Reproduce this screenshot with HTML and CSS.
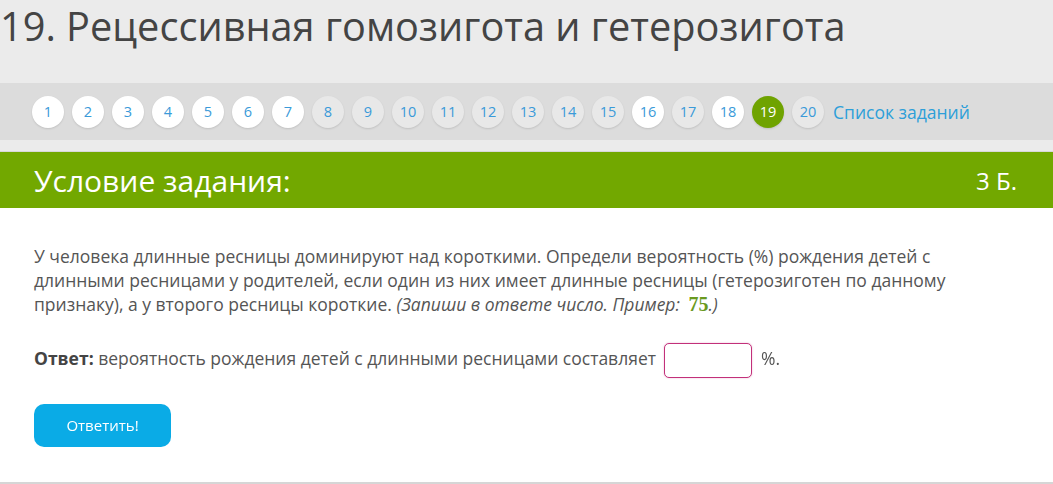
FILE: index.html
```html
<!DOCTYPE html>
<html lang="ru">
<head>
  <meta charset="UTF-8" />
  <title>19. Рецессивная гомозигота и гетерозигота</title>
  <link rel="stylesheet" href="styles.css">
</head>
<body>

  <header class="page-head">
    <h1>19. Рецессивная гомозигота и гетерозигота</h1>
  </header>

  <nav class="task-nav">
    <a class="num done" href="#">1</a>
    <a class="num done" href="#">2</a>
    <a class="num done" href="#">3</a>
    <a class="num done" href="#">4</a>
    <a class="num done" href="#">5</a>
    <a class="num done" href="#">6</a>
    <a class="num done" href="#">7</a>
    <a class="num" href="#">8</a>
    <a class="num" href="#">9</a>
    <a class="num" href="#">10</a>
    <a class="num" href="#">11</a>
    <a class="num" href="#">12</a>
    <a class="num" href="#">13</a>
    <a class="num" href="#">14</a>
    <a class="num" href="#">15</a>
    <a class="num done" href="#">16</a>
    <a class="num" href="#">17</a>
    <a class="num done" href="#">18</a>
    <a class="num current" href="#">19</a>
    <a class="num" href="#">20</a>
    <a class="task-list" href="#">Список заданий</a>
  </nav>

  <div class="strip"></div>

  <div class="task-bar">
    <h2>Условие задания:</h2>
    <span class="points">3 Б.</span>
  </div>

  <div class="task-body">
    <p class="question">У человека длинные ресницы доминируют над короткими. Определи вероятность (%) рождения детей с длинными ресницами у родителей, если один из них имеет длинные ресницы (гетерозиготен по данному признаку), а у второго ресницы короткие. <em>(Запиши в ответе число. Пример:</em> <span class="example">75</span><em>.)</em></p>

    <form class="answer" onsubmit="event.preventDefault()">
      <p class="answer-line"><b>Ответ:</b> вероятность рождения детей с длинными ресницами составляет <input type="text" class="answer-input" autofocus> %.</p>
      <button type="submit" class="submit">Ответить!</button>
    </form>
  </div>

  <div class="bottom-line"></div>

</body>
</html>
```

FILE: styles.css
```css
body {
  margin: 0;
  font-family: "Open Sans", Arial, sans-serif;
  color: #555;
  background: #fff;
}

.page-head {
  background: #ebebeb;
  height: 83px;
  overflow: hidden;
}

.page-head h1 {
  margin: 0;
  padding: 1px 0 0 0;
  font-size: 39.7px;
  font-weight: normal;
  color: #444;
  line-height: 50px;
}

.task-nav {
  display: flex;
  align-items: center;
  gap: 8px;
  height: 57px;
  padding-left: 32px;
  background: #dcdcdc;
}

.num {
  width: 32px;
  height: 32px;
  border-radius: 50%;
  background: #e8e8e8;
  color: #3a9ad9;
  font-size: 14.5px;
  line-height: 32px;
  text-align: center;
  text-decoration: none;
  box-shadow: 0 1px 2px rgba(0, 0, 0, 0.12);
}

.num.done {
  background: #fff;
}

.num.current {
  background: #6fa300;
  color: #fff;
}

.task-list {
  margin-left: 1px;
  color: #2d9fd9;
  font-size: 17.5px;
  text-decoration: none;
}

.strip {
  height: 11px;
  background: #ebebeb;
  border-bottom: 1px solid #d8d8d8;
}

.task-bar {
  display: flex;
  justify-content: space-between;
  align-items: center;
  height: 56px;
  padding: 0 36px 0 34px;
  background: #72a800;
  color: #fff;
}

.task-bar h2 {
  margin: 0;
  font-size: 30px;
  font-weight: normal;
}

.points {
  font-size: 24px;
}

.task-body {
  padding: 36px 34px 35px 34px;
}

.question {
  margin: 0;
  font-size: 17.5px;
  line-height: 24px;
  max-width: 980px;
}

.example {
  font-family: "Liberation Serif", serif;
  font-weight: bold;
  color: #6a9a1f;
  font-size: 20px;
  line-height: 1;
  margin-left: 4px;
}

.answer-line {
  margin: 24px 0 0 0;
  font-size: 17.5px;
  line-height: 36px;
}

.answer-line b {
  color: #444;
}

.answer-input {
  box-sizing: border-box;
  width: 88px;
  height: 35px;
  margin: 0 5px 0 3px;
  padding: 2px 6px;
  border: 1px solid #c2307a;
  border-radius: 5px;
  box-shadow: 0 0 2px rgba(194, 48, 122, 0.35);
  font-size: 17px;
  vertical-align: middle;
  outline: none;
}

.submit {
  display: block;
  margin-top: 26px;
  width: 137px;
  height: 43px;
  border: none;
  border-radius: 10px;
  background: #0aabe6;
  color: #fff;
  font-family: "Open Sans", Arial, sans-serif;
  font-size: 15px;
  cursor: pointer;
}

.bottom-line {
  border-top: 2px solid #d6d6d6;
}
```
